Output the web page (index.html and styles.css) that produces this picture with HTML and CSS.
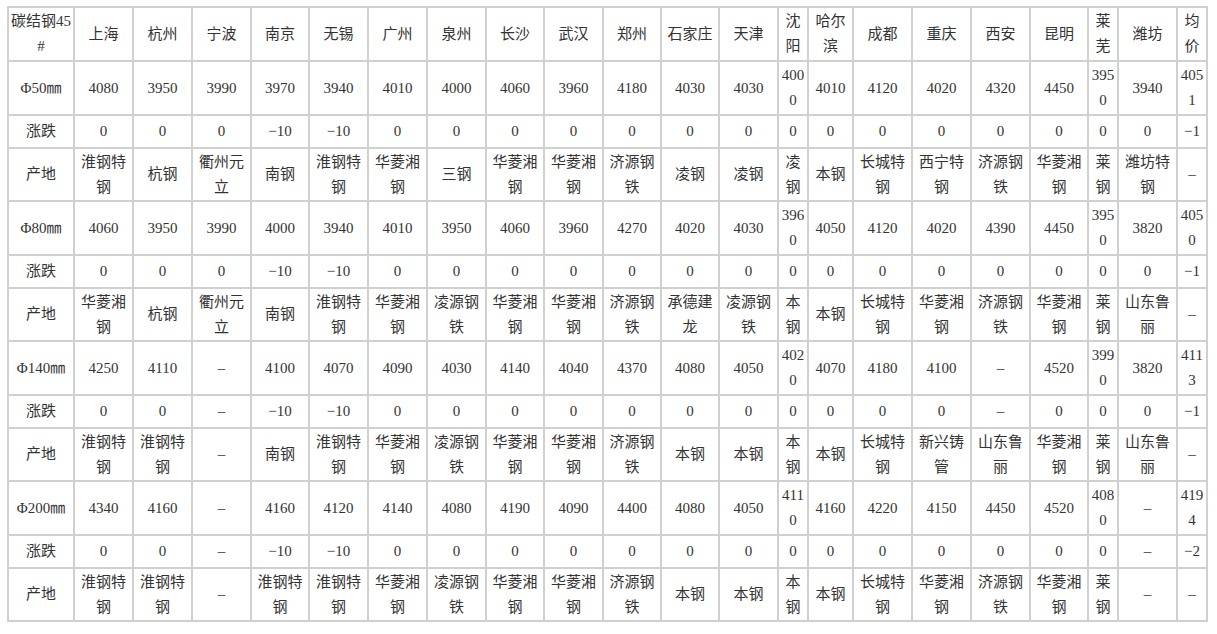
FILE: index.html
```html
<!DOCTYPE html>
<html lang="zh-CN">
<head>
<meta charset="utf-8">
<title>碳结钢45# 价格</title>
<link rel="stylesheet" href="styles.css">
</head>
<body>
<div class="wrap">
<table class="price">
<colgroup>
<col class="w66"><col class="w59"><col class="w59"><col class="w59"><col class="w58"><col class="w59"><col class="w59"><col class="w59"><col class="w58"><col class="w59"><col class="w58"><col class="w58"><col class="w59"><col class="w30"><col class="w45"><col class="w59"><col class="w59"><col class="w59"><col class="w58"><col class="w30"><col class="w59"><col class="w30">
</colgroup>
<tbody>
<tr class="rh"><td>碳结钢45 #</td><td>上海</td><td>杭州</td><td>宁波</td><td>南京</td><td>无锡</td><td>广州</td><td>泉州</td><td>长沙</td><td>武汉</td><td>郑州</td><td>石家庄</td><td>天津</td><td>沈阳</td><td>哈尔滨</td><td>成都</td><td>重庆</td><td>西安</td><td>昆明</td><td>莱芜</td><td>潍坊</td><td>均价</td></tr>

<tr class="rp"><td>Φ50㎜</td><td>4080</td><td>3950</td><td>3990</td><td>3970</td><td>3940</td><td>4010</td><td>4000</td><td>4060</td><td>3960</td><td>4180</td><td>4030</td><td>4030</td><td>4000</td><td>4010</td><td>4120</td><td>4020</td><td>4320</td><td>4450</td><td>3950</td><td>3940</td><td>4051</td></tr>
<tr class="rc"><td>涨跌</td><td>0</td><td>0</td><td>0</td><td>−10</td><td>−10</td><td>0</td><td>0</td><td>0</td><td>0</td><td>0</td><td>0</td><td>0</td><td>0</td><td>0</td><td>0</td><td>0</td><td>0</td><td>0</td><td>0</td><td>0</td><td>−1</td></tr>
<tr class="ro"><td>产地</td><td>淮钢特钢</td><td>杭钢</td><td>衢州元立</td><td>南钢</td><td>淮钢特钢</td><td>华菱湘钢</td><td>三钢</td><td>华菱湘钢</td><td>华菱湘钢</td><td>济源钢铁</td><td>凌钢</td><td>凌钢</td><td>凌钢</td><td>本钢</td><td>长城特钢</td><td>西宁特钢</td><td>济源钢铁</td><td>华菱湘钢</td><td>莱钢</td><td>潍坊特钢</td><td>–</td></tr>

<tr class="rp"><td>Φ80㎜</td><td>4060</td><td>3950</td><td>3990</td><td>4000</td><td>3940</td><td>4010</td><td>3950</td><td>4060</td><td>3960</td><td>4270</td><td>4020</td><td>4030</td><td>3960</td><td>4050</td><td>4120</td><td>4020</td><td>4390</td><td>4450</td><td>3950</td><td>3820</td><td>4050</td></tr>
<tr class="rc"><td>涨跌</td><td>0</td><td>0</td><td>0</td><td>−10</td><td>−10</td><td>0</td><td>0</td><td>0</td><td>0</td><td>0</td><td>0</td><td>0</td><td>0</td><td>0</td><td>0</td><td>0</td><td>0</td><td>0</td><td>0</td><td>0</td><td>−1</td></tr>
<tr class="ro"><td>产地</td><td>华菱湘钢</td><td>杭钢</td><td>衢州元立</td><td>南钢</td><td>淮钢特钢</td><td>华菱湘钢</td><td>凌源钢铁</td><td>华菱湘钢</td><td>华菱湘钢</td><td>济源钢铁</td><td>承德建龙</td><td>凌源钢铁</td><td>本钢</td><td>本钢</td><td>长城特钢</td><td>华菱湘钢</td><td>济源钢铁</td><td>华菱湘钢</td><td>莱钢</td><td>山东鲁丽</td><td>–</td></tr>

<tr class="rp"><td>Φ140㎜</td><td>4250</td><td>4110</td><td>–</td><td>4100</td><td>4070</td><td>4090</td><td>4030</td><td>4140</td><td>4040</td><td>4370</td><td>4080</td><td>4050</td><td>4020</td><td>4070</td><td>4180</td><td>4100</td><td>–</td><td>4520</td><td>3990</td><td>3820</td><td>4113</td></tr>
<tr class="rc"><td>涨跌</td><td>0</td><td>0</td><td>–</td><td>−10</td><td>−10</td><td>0</td><td>0</td><td>0</td><td>0</td><td>0</td><td>0</td><td>0</td><td>0</td><td>0</td><td>0</td><td>0</td><td>–</td><td>0</td><td>0</td><td>0</td><td>−1</td></tr>
<tr class="ro"><td>产地</td><td>淮钢特钢</td><td>淮钢特钢</td><td>–</td><td>南钢</td><td>淮钢特钢</td><td>华菱湘钢</td><td>凌源钢铁</td><td>华菱湘钢</td><td>华菱湘钢</td><td>济源钢铁</td><td>本钢</td><td>本钢</td><td>本钢</td><td>本钢</td><td>长城特钢</td><td>新兴铸管</td><td>山东鲁丽</td><td>华菱湘钢</td><td>莱钢</td><td>山东鲁丽</td><td>–</td></tr>

<tr class="rp"><td>Φ200㎜</td><td>4340</td><td>4160</td><td>–</td><td>4160</td><td>4120</td><td>4140</td><td>4080</td><td>4190</td><td>4090</td><td>4400</td><td>4080</td><td>4050</td><td>4110</td><td>4160</td><td>4220</td><td>4150</td><td>4450</td><td>4520</td><td>4080</td><td>–</td><td>4194</td></tr>
<tr class="rc"><td>涨跌</td><td>0</td><td>0</td><td>–</td><td>−10</td><td>−10</td><td>0</td><td>0</td><td>0</td><td>0</td><td>0</td><td>0</td><td>0</td><td>0</td><td>0</td><td>0</td><td>0</td><td>0</td><td>0</td><td>0</td><td>–</td><td>−2</td></tr>
<tr class="ro"><td>产地</td><td>淮钢特钢</td><td>淮钢特钢</td><td>–</td><td>淮钢特钢</td><td>淮钢特钢</td><td>华菱湘钢</td><td>凌源钢铁</td><td>华菱湘钢</td><td>华菱湘钢</td><td>济源钢铁</td><td>本钢</td><td>本钢</td><td>本钢</td><td>本钢</td><td>长城特钢</td><td>华菱湘钢</td><td>济源钢铁</td><td>华菱湘钢</td><td>莱钢</td><td>–</td><td>–</td></tr>
</tbody>
</table>
</div>
</body>
</html>
```

FILE: styles.css
```css
html, body {
  margin: 0;
  padding: 0;
  background: #ffffff;
}
.wrap {
  padding: 6px 0 0 7px;
}
.price {
  border-collapse: collapse;
  table-layout: fixed;
  width: 1201px;
  font-family: "Liberation Serif", "Noto Sans CJK SC", serif;
  font-size: 15px;
  line-height: 25px;
  color: #333333;
}
.price td {
  border: 2px solid #d0d0d0;
  padding: 0 1px;
  text-align: center;
  vertical-align: middle;
  word-break: break-all;
  overflow-wrap: anywhere;
}
.w66 { width: 66px; }
.w59 { width: 59px; }
.w58 { width: 58px; }
.w45 { width: 45px; }
.w30 { width: 30px; }
.rh { height: 54px; }
.rp { height: 54px; }
.rc { height: 33px; }
.ro { height: 53px; }
```
